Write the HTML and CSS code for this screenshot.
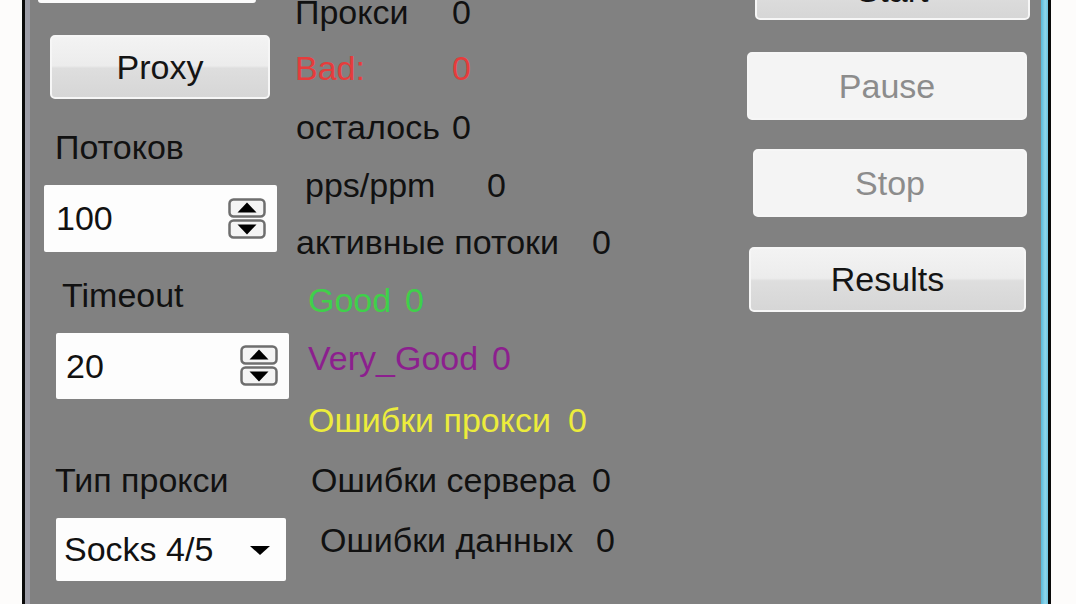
FILE: index.html
```html
<!DOCTYPE html>
<html>
<head>
<meta charset="utf-8">
<link rel="stylesheet" href="styles.css">
</head>
<body>
<div class="screen">
  <div class="outside-left"></div>
  <div class="frame-black"></div>
  <div class="panel">
    <div class="col-left">
      <div class="topbox"></div>
      <div class="btn btn-proxy">Proxy</div>
      <div class="lbl lbl-threads">Потоков</div>
      <div class="spin spin-1">
        <span class="spin-val">100</span>
        <svg class="spin-ctl" width="38" height="42" viewBox="0 0 38 42">
          <rect x="1.5" y="1.5" width="35" height="17" rx="4" fill="#f4f4f4" stroke="#6e6e6e" stroke-width="2.5"/>
          <polygon points="19,4.5 28.5,14.5 9.5,14.5" fill="#000"/>
          <rect x="1.5" y="22.5" width="35" height="17" rx="4" fill="#f4f4f4" stroke="#6e6e6e" stroke-width="2.5"/>
          <polygon points="9.5,26.5 28.5,26.5 19,36.5" fill="#000"/>
        </svg>
      </div>
      <div class="lbl lbl-timeout">Timeout</div>
      <div class="spin spin-2">
        <span class="spin-val">20</span>
        <svg class="spin-ctl" width="38" height="42" viewBox="0 0 38 42">
          <rect x="1.5" y="1.5" width="35" height="17" rx="4" fill="#f4f4f4" stroke="#6e6e6e" stroke-width="2.5"/>
          <polygon points="19,4.5 28.5,14.5 9.5,14.5" fill="#000"/>
          <rect x="1.5" y="22.5" width="35" height="17" rx="4" fill="#f4f4f4" stroke="#6e6e6e" stroke-width="2.5"/>
          <polygon points="9.5,26.5 28.5,26.5 19,36.5" fill="#000"/>
        </svg>
      </div>
      <div class="lbl lbl-type">Тип прокси</div>
      <div class="combo">
        <span class="combo-val">Socks 4/5</span>
        <svg class="combo-arrow" width="20" height="10" viewBox="0 0 20 10">
          <polygon points="0,0 20,0 10,9" fill="#000"/>
        </svg>
      </div>
    </div>

    <div class="col-mid">
      <div class="row r1"><span class="k">Прокси</span><span class="v">0</span></div>
      <div class="row r2 red"><span class="k">Bad:</span><span class="v">0</span></div>
      <div class="row r3"><span class="k">осталось</span><span class="v">0</span></div>
      <div class="row r4"><span class="k">pps/ppm</span><span class="v">0</span></div>
      <div class="row r5"><span class="k">активные потоки</span><span class="v">0</span></div>
      <div class="row r6 green"><span class="k">Good</span><span class="v">0</span></div>
      <div class="row r7 purple"><span class="k">Very_Good</span><span class="v">0</span></div>
      <div class="row r8 yellow"><span class="k">Ошибки прокси</span><span class="v">0</span></div>
      <div class="row r9"><span class="k">Ошибки сервера</span><span class="v">0</span></div>
      <div class="row r10"><span class="k">Ошибки данных</span><span class="v">0</span></div>
    </div>

    <div class="col-right">
      <div class="btn btn-start">Start</div>
      <div class="btn btn-flat btn-pause">Pause</div>
      <div class="btn btn-flat btn-stop">Stop</div>
      <div class="btn btn-results">Results</div>
    </div>
  </div>
  <div class="frame-blue"></div>
  <div class="frame-black"></div>
  <div class="outside-right"></div>
</div>
</body>
</html>
```

FILE: styles.css
```css
html, body {
  margin: 0;
  padding: 0;
  width: 1076px;
  height: 604px;
  overflow: hidden;
  background: #fdfdfd;
}

.screen {
  display: flex;
  width: 1076px;
  height: 604px;
  font-family: "Liberation Sans", Arial, sans-serif;
  font-size: 34px;
  color: #111;
}

.outside-left { width: 22px; background: #fdfcfb; }
.outside-right { width: 25px; background: #fdfcfb; }
.frame-black { width: 3px; background: #0a0a0a; }
.frame-blue { width: 7px; background: linear-gradient(90deg, #58b8d8, #8fd6ec 60%, #6cc4e0); }

.panel {
  flex: 1;
  display: flex;
  background: #818181;
  border-left: 5px solid #9c9ca6;
  overflow: hidden;
}

/* ---------- left column ---------- */
.col-left {
  width: 265px;
  flex-shrink: 0;
  display: flex;
  flex-direction: column;
  align-items: flex-start;
}

.topbox {
  margin-top: -60px;
  margin-left: 8px;
  width: 218px;
  height: 63px;
  background: #fbfbfb;
  border-radius: 3px;
}

.btn {
  box-sizing: border-box;
  display: flex;
  align-items: center;
  justify-content: center;
  border: 2px solid #f6f6f6;
  border-radius: 5px;
  background: linear-gradient(180deg, #f3f3f3 0%, #ececec 48%, #dedede 52%, #d6d6d6 100%);
  color: #141414;
  white-space: nowrap;
}

.btn-proxy {
  margin-top: 32px;
  margin-left: 20px;
  width: 220px;
  height: 64px;
}

.lbl {
  height: 40px;
  line-height: 40px;
  white-space: nowrap;
}
.lbl-threads { margin-top: 28px; margin-left: 25px; }
.lbl-timeout { margin-top: 23px; margin-left: 32px; }
.lbl-type { margin-top: 61px; margin-left: 25px; }

.spin {
  box-sizing: border-box;
  display: flex;
  align-items: center;
  justify-content: space-between;
  background: #fdfdfd;
  border-radius: 2px;
  width: 233px;
}
.spin-1 { margin-top: 18px; margin-left: 14px; height: 67px; padding: 0 11px 0 12px; }
.spin-2 { margin-top: 18px; margin-left: 26px; height: 66px; padding: 0 11px 0 10px; }
.spin-ctl { display: block; }

.combo {
  box-sizing: border-box;
  display: flex;
  align-items: center;
  justify-content: space-between;
  margin-top: 18px;
  margin-left: 26px;
  width: 230px;
  height: 63px;
  padding: 0 16px 0 8px;
  background: #fdfdfd;
  border-radius: 2px;
}
.combo-arrow { display: block; margin-top: 2px; }

/* ---------- middle column ---------- */
.col-mid {
  width: 445px;
  flex-shrink: 0;
  display: grid;
  grid-template-rows: 56px 59px 58px 57px 58px 58px 62px 60px 60px 60px;
  margin-top: -8px;
}

.row {
  display: flex;
  align-items: center;
  height: 40px;
  line-height: 40px;
  white-space: nowrap;
}
.row .k { flex-shrink: 0; display: block; }
.row .v { display: block; }

.r1 .k, .r2 .k { width: 157px; }
.r3 { padding-left: 1px; }
.r3 .k { width: 156px; }
.r4 { padding-left: 10px; }
.r4 .k { width: 182px; }
.r5 { padding-left: 1px; }
.r5 .k { width: 296px; }
.r6, .r7, .r8 { padding-left: 13px; }
.r6 .k { width: 97px; }
.r7 .k { width: 184px; }
.r8 .k { width: 260px; }
.r9 { padding-left: 16px; }
.r9 .k { width: 281px; }
.r10 { padding-left: 25px; }
.r10 .k { width: 276px; }

.red { color: #e63c3c; }
.green { color: #3fd04a; }
.purple { color: #8c1f8e; }
.yellow { color: #ecec3c; }

/* ---------- right column ---------- */
.col-right {
  flex: 1;
  display: flex;
  flex-direction: column;
  align-items: flex-start;
}

.btn-start {
  margin-top: -40px;
  margin-left: 15px;
  width: 275px;
  height: 60px;
}
.btn-flat {
  background: #f4f4f4;
  color: #8c8c8c;
}
.btn-pause {
  margin-top: 32px;
  margin-left: 7px;
  width: 280px;
  height: 68px;
}
.btn-stop {
  margin-top: 29px;
  margin-left: 13px;
  width: 274px;
  height: 68px;
}
.btn-results {
  margin-top: 30px;
  margin-left: 9px;
  width: 277px;
  height: 65px;
}
```
